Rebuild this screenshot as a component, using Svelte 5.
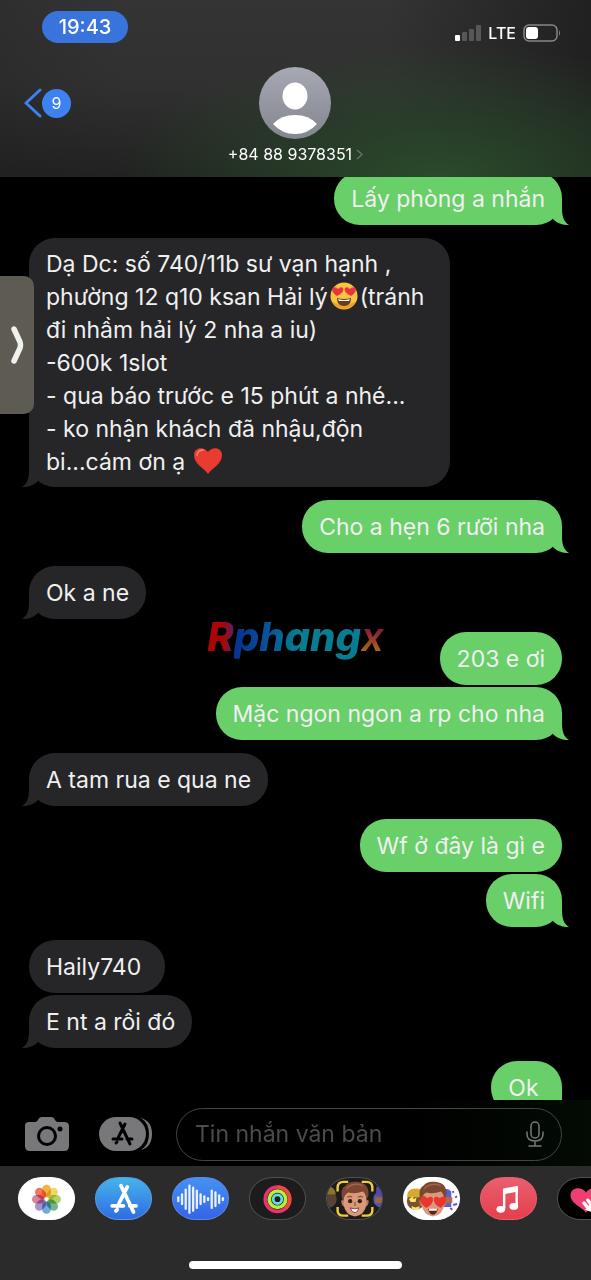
<script>
    // some messages were typed with a trailing space, kept as \u00a0
    const groups = [
        { from: 'me', messages: ['Lấy phòng a nhắn'] },
        {
            from: 'them',
            long: true,
            messages: [
                'Dạ Dc: số 740/11b sư vạn hạnh , phường 12 q10 ksan Hải lý😍(tránh đi nhầm hải lý 2 nha a iu)\n-600k 1slot\n- qua báo trước e 15 phút a nhé...\n- ko nhận khách đã nhậu,độn bi...cám ơn ạ ❤️'
            ]
        },
        { from: 'me', messages: ['Cho a hẹn 6 rưỡi nha'] },
        { from: 'them', messages: ['Ok a ne'] },
        { from: 'me', messages: ['203 e ơi', 'Mặc ngon ngon a rp cho nha'] },
        { from: 'them', messages: ['A tam rua e qua ne'] },
        { from: 'me', messages: ['Wf ở đây là gì e', 'Wifi'] },
        { from: 'them', messages: ['Haily740\u00a0', 'E nt a rồi đó'] },
        { from: 'me', messages: ['Ok\u00a0'] }
    ];

    // emoji are drawn, so they are split out of the text
    function parts(text) {
        return text.split(/(😍|❤️)/);
    }

    const petals = [
        ['#f5a623', 0], ['#e8d24a', 45], ['#a4c94f', 90], ['#57a878', 135],
        ['#5a9bd5', 180], ['#9a7fc0', 225], ['#cf6f8f', 270], ['#ee6045', 315]
    ];

    const wave = [2, 5, 10, 14, 12, 9, 5, 3, 1, 9, 7, 4, 1];

    let draft = '';
</script>

{#snippet storeMark()}
    <path d="M-9 6H0M5 6H10M-6 10L-5 9M-4 5L3 -9M-2 -10L8 11" />
{/snippet}

{#snippet face()}
    <path d="M-12 0q-3-1-2 3t4 4M12 0q3-1 2 3t-4 4" fill="#b9775a" />
    <path d="M-12-5q0-8 12-8t12 8v9q-2 12-12 13q-10-1-12-13z" fill="#d9997a" />
    <path d="M-13 0q-3-12 3-15q4-5 12-4q13 1 12 14l-2 5q-1-8-4-9q-8 3-15 1q-4 2-5 8z" fill="#7c4730" />
    <path d="M-9-12q8-7 17-3" fill="none" stroke="#a0654a" stroke-width="1.5" />
{/snippet}

<div class="phone">
    <header>
        <div class="status">
            <span class="time">19:43</span>
            <div class="network">
                <svg width="26" height="16" viewBox="0 0 26 16" aria-hidden="true">
                    <rect y="10" width="5" height="6" rx="1" fill="#fff" />
                    <rect x="7" y="7" width="5" height="9" rx="1" fill="#565856" />
                    <rect x="14" y="4" width="5" height="12" rx="1" fill="#565856" />
                    <rect x="21" width="5" height="16" rx="1" fill="#565856" />
                </svg>
                <span>LTE</span>
                <svg width="38" height="18" viewBox="0 0 38 18" aria-hidden="true">
                    <rect x="1" y="1" width="33" height="16" rx="5" fill="none" stroke="#858785" stroke-width="1.5" />
                    <rect x="3" y="3" width="12" height="12" rx="3" fill="#fff" />
                    <path d="M36 6q2 3 0 6z" fill="#858785" />
                </svg>
            </div>
        </div>
        <div class="contact-row">
            <button class="back" aria-label="9">
                <svg width="18" height="30" viewBox="0 0 18 30" aria-hidden="true">
                    <path d="M16 2L2 15L16 28" fill="none" stroke="#3d82f0" stroke-width="3" stroke-linecap="round" stroke-linejoin="round" />
                </svg>
                <span class="badge">9</span>
            </button>
            <button class="contact">
                <svg width="72" height="72" viewBox="0 0 72 72" aria-hidden="true">
                    <defs>
                        <linearGradient id="avatar" x1="0" y1="0" x2="0" y2="1">
                            <stop offset="0" stop-color="#a6a8b4" />
                            <stop offset="1" stop-color="#83858f" />
                        </linearGradient>
                    </defs>
                    <circle cx="36" cy="36" r="36" fill="url(#avatar)" />
                    <ellipse cx="36" cy="29" rx="12.5" ry="13.5" fill="#fff" />
                    <path d="M14 57q8-9 22-9t22 9q-9 10-22 10t-22-10z" fill="#fff" />
                </svg>
                <span class="number">+84 88 9378351
                    <svg width="7" height="11" viewBox="0 0 7 11" aria-hidden="true">
                        <path d="M1 1L6 5.5L1 10" fill="none" stroke="#677569" stroke-width="1.3" />
                    </svg>
                </span>
            </button>
        </div>
    </header>

    <main>
        {#each groups as group}
            <div class="group {group.from}" class:long={group.long}>
                {#each group.messages as message, i}
                    <div class="bubble">{#each parts(message) as part}{#if part === '😍'}<svg class="emoji" viewBox="0 0 28 28" role="img" aria-label="😍">
                            <circle cx="14" cy="14" r="13.5" fill="#f9c440" />
                            <path d="M2 19a13 13 0 0 0 24 0q-12 8-24 0z" fill="#eda02e" />
                            <path d="M7 16q7 2 14 0q0 8-7 8t-7-8z" fill="#70381d" />
                            <path d="M8 17q6 2 12 0l-1 2H9z" fill="#fff" />
                            <path d="M7 14Q0 9 3 6q3-2 5 1q3-3 5-1q2 4-6 8zM21 14q-8-4-6-8q2-2 5 1q2-3 5-1q3 3-4 8z" fill="#e8343c" />
                        </svg>{:else if part === '❤️'}<svg class="emoji" viewBox="0 0 28 28" role="img" aria-label="❤️">
                            <path d="M14 27C10 21 0 17 0 8C0 0 10-1 14 5C18-1 28 0 28 8C28 17 18 21 14 27z" fill="#e93b30" />
                            <path d="M3 8q1-5 6-5" fill="none" stroke="#f5786a" stroke-width="2" stroke-linecap="round" />
                        </svg>{:else}{part}{/if}{/each}{#if i === group.messages.length - 1}<svg class="tail" width="18" height="27" viewBox="0 0 18 27" aria-hidden="true">
                            <path d="M0 0H11V10C11 19 13 24 18 27C11 27 6 25 2 21z" />
                        </svg>{/if}</div>
                {/each}
            </div>
        {/each}
        <div class="watermark"><span class="r">R</span><span class="mid">phang</span><span class="x">x</span></div>
    </main>

    <button class="handle" aria-label="›">
        <svg width="13" height="40" viewBox="0 0 13 40" aria-hidden="true">
            <path d="M3 4L9 17Q10 20 9 23L3 36" fill="none" stroke="#f0f0ec" stroke-width="5.5" stroke-linecap="round" stroke-linejoin="round" />
        </svg>
    </button>

    <form class="composer" on:submit|preventDefault>
        <button type="button" aria-label="Camera">
            <svg width="44" height="34" viewBox="0 0 44 34" aria-hidden="true">
                <path d="M4 5H10Q12 5 13 3Q14 0 17 0H26Q29 0 30 3Q31 5 33 5H39Q44 5 44 9V29Q44 34 39 34H5Q0 34 0 29V9Q0 5 4 5z" fill="#78787a" />
                <circle cx="22" cy="19" r="8.5" fill="none" stroke="#000" stroke-width="3" />
                <circle cx="35" cy="12" r="2.5" fill="#000" />
            </svg>
        </button>
        <button type="button" aria-label="App Store">
            <svg width="53" height="34" viewBox="0 0 53 34" aria-hidden="true">
                <rect width="47" height="34" rx="17" fill="#78787a" />
                <path d="M42 1Q53 4 53 17T42 33Q50 28 50 17T42 1z" fill="#78787a" />
                <g transform="translate(23 16)" fill="none" stroke="#000" stroke-width="3" stroke-linecap="round">{@render storeMark()}</g>
            </svg>
        </button>
        <label class="field">
            <input type="text" placeholder="Tin nhắn văn bản" aria-label="Tin nhắn văn bản" bind:value={draft} />
            <svg width="18" height="26" viewBox="0 0 18 26" aria-hidden="true">
                <g fill="none" stroke="#78787a" stroke-width="1.5" stroke-linecap="round">
                    <rect x="5" y="1" width="8" height="16" rx="4" />
                    <path d="M1 11v2q0 7 8 7t8-7v-2M9 20v5M3 25h12" />
                </g>
            </svg>
        </label>
    </form>

    <footer>
        <nav>
            <button class="app white" aria-label="Photos">
                <svg viewBox="0 0 57 43" aria-hidden="true">
                    <g transform="translate(28.5 22)">
                        {#each petals as [color, angle]}
                            <rect class="petal" x="-4.5" y="-15" width="9" height="13" rx="4.5" fill={color} transform="rotate({angle})" />
                        {/each}
                    </g>
                </svg>
            </button>
            <button class="app store" aria-label="App Store">
                <svg viewBox="0 0 57 43" aria-hidden="true">
                    <g transform="translate(28.5 21) scale(1.3)" fill="none" stroke="#fff" stroke-width="3" stroke-linecap="round">{@render storeMark()}</g>
                </svg>
            </button>
            <button class="app audio" aria-label="Audio">
                <svg viewBox="0 0 57 43" aria-hidden="true">
                    {#each wave as h, i}
                        <path d="M{5.5 + i * 3.85} {22 - h}v{h * 2}" stroke="#e8f1ff" stroke-width="2.4" stroke-linecap="round" />
                    {/each}
                </svg>
            </button>
            <button class="app dark" aria-label="Activity">
                <svg viewBox="0 0 57 43" aria-hidden="true">
                    <g fill="none" stroke-width="3.8">
                        <circle cx="28.5" cy="22" r="12.7" stroke="#e8336d" />
                        <path d="M28.5 9.3A12.7 12.7 0 0 1 37 31.4" stroke="#f04a3c" />
                        <circle cx="28.5" cy="22" r="8.5" stroke="#b6f03c" />
                        <circle cx="28.5" cy="22" r="4.5" stroke="#62dce4" stroke-width="3" />
                    </g>
                </svg>
            </button>
            <button class="app dark" aria-label="Memoji">
                <svg viewBox="0 0 57 43" aria-hidden="true">
                    <circle cx="1" cy="22" r="9" fill="#5a4136" />
                    <path d="M-4 17q0-9 8-8q5 2 5 8z" fill="#8b7424" />
                    <circle cx="57" cy="22" r="9" fill="#4b55b4" />
                    <path d="M50 20h9v6h-9z" fill="#a4623c" />
                    <path d="M51 9h8v9h-8z" fill="#5547ad" />
                    <g transform="translate(29 23)">
                        {@render face()}
                        <circle cx="-5" cy="1" r="2.2" fill="#33211c" />
                        <circle cx="5" cy="1" r="2.2" fill="#33211c" />
                        <path d="M-8-3q3-2 5 0M3-3q3-2 5 0M0 2v4" fill="none" stroke="#8a5238" stroke-width="1.2" />
                        <path d="M-5 8q5 2 9 0q-1 5-4 5t-5-5z" fill="#fff" stroke="#8b3e35" />
                    </g>
                    <path d="M11 14V10Q11 4 17 4H22M36 4H41Q47 4 47 10V14M47 30V34Q47 39 41 39H36M22 39H17Q11 39 11 34V30" fill="none" stroke="#f0cb3c" stroke-width="2.5" />
                </svg>
            </button>
            <button class="app white" aria-label="Stickers">
                <svg viewBox="0 0 57 43" aria-hidden="true">
                    <circle cx="12" cy="24" r="9" fill="#7b5132" />
                    <path d="M3 20q0-9 9-9t9 9z" fill="#d9a72c" />
                    <path d="M5 22l4-3l1 3l3-2l-1 5h-5zM8 29q4 3 8 0v3q-4 3-8 0z" fill="#fbe26b" />
                    <path d="M39 14q5-5 10 0v16h-9z" fill="#5960d0" />
                    <path d="M41 20h9v6h-9z" fill="#b46b4a" />
                    <path d="M50 15l2-1M53 20l2-1M51 28l4-1M48 31l2 2" stroke="#6a4be0" stroke-width="2" />
                    <g transform="translate(30 23)">
                        {@render face()}
                        <path d="M-7 8Q-16 2-12-3Q-9-6-6-2Q-2-5 0-2Q1 4-7 8zM8 8Q0 4 1-2Q3-5 7-2Q10-5 13-3Q16 2 8 8z" fill="#ed3530" />
                        <path d="M-5 9q5 2 10 0q-1 6-5 6t-5-6z" fill="#5b211e" />
                        <path d="M-4 9h8v2h-8z" fill="#fff" />
                    </g>
                </svg>
            </button>
            <button class="app music" aria-label="Music">
                <svg viewBox="0 0 57 43" aria-hidden="true">
                    <path d="M24 12V32M37 9V29" fill="none" stroke="#fff" stroke-width="2.5" />
                    <path d="M23 11L38 8V14L23 17z" fill="#fff" />
                    <ellipse cx="20.5" cy="32.5" rx="4.5" ry="3.5" fill="#fff" />
                    <ellipse cx="34" cy="29.5" rx="4.5" ry="3.5" fill="#fff" />
                </svg>
            </button>
            <button class="app black" aria-label="Digital Touch">
                <svg viewBox="0 0 57 43" aria-hidden="true">
                    <path d="M29 36C25 30 13 27 13 18C13 10 24 8 29 15C34 8 44 10 44 18C44 27 33 30 29 36z" fill="#ee3f74" />
                    <path d="M27 26l5 6M31 23l5 7" stroke="#fff" stroke-width="3.5" stroke-linecap="round" />
                    <path d="M28 33l7-8l6 3v9z" fill="#fff" />
                </svg>
            </button>
        </nav>
        <div class="home-bar"></div>
    </footer>
</div>

<style>
    :global(body) {
        background: #000;
    }

    .phone {
        position: relative;
        display: flex;
        flex-direction: column;
        height: 100vh;
        overflow: hidden;
        font-family: Inter, "Liberation Sans", sans-serif;
        color: #fff;
    }

    button {
        padding: 0;
        border: 0;
        background: none;
        color: inherit;
        font: inherit;
        cursor: pointer;
    }

    svg {
        display: block;
    }

    header {
        height: 177px;
        flex: none;
        background:
            radial-gradient(ellipse 55% 75% at 74% 100%, #2a4b2b, transparent),
            linear-gradient(90deg, #1f1f1f44, transparent 20%, transparent 65%, #1c1c1ccc),
            linear-gradient(#343434, #303030 50%, #202120);
    }

    .status {
        display: flex;
        justify-content: space-between;
        padding: 11px 30px 0 42px;
    }

    .time {
        width: 86px;
        height: 32px;
        border-radius: 16px;
        background: #3874db;
        font-size: 20px;
        font-weight: 500;
        line-height: 32px;
        text-align: center;
    }

    .network {
        display: flex;
        align-items: center;
        gap: 7px;
        padding-top: 11px;
        font-size: 16px;
        font-weight: 500;
        line-height: 20px;
    }

    .contact-row {
        display: grid;
        grid-template-columns: 1fr auto 1fr;
        align-items: start;
        padding: 24px 24px 0;
    }

    .back {
        display: flex;
        align-items: center;
        justify-self: start;
        padding-top: 21px;
    }

    .badge {
        width: 29px;
        height: 29px;
        border-radius: 50%;
        background: #3d82f0;
        font-size: 16px;
        line-height: 29px;
    }

    .contact {
        display: flex;
        flex-direction: column;
        align-items: center;
        gap: 5px;
    }

    .number {
        display: flex;
        align-items: center;
        gap: 4px;
        font-size: 16px;
        line-height: 20px;
    }

    main {
        position: relative;
        flex: 1;
        min-height: 0;
        overflow: hidden;
        display: flex;
        flex-direction: column;
        gap: 13px;
        padding: 0 29px;
    }

    .group {
        flex: none;
        display: flex;
        flex-direction: column;
        align-items: flex-start;
        gap: 2px;
    }

    .group:first-child {
        margin-top: -5px;
    }

    .me {
        align-items: flex-end;
    }

    .bubble {
        position: relative;
        box-sizing: border-box;
        max-width: 79%;
        padding: 11px 17px 9px;
        border-radius: 26px;
        background: #262628;
        color: #f0f0f1;
        font-size: 23px;
        line-height: 33px;
        white-space: pre-line;
    }

    .long .bubble {
        padding: 10px 17px 8px;
    }

    .me .bubble {
        background: #68cf69;
    }

    .emoji {
        display: inline-block;
        width: 28px;
        height: 28px;
        margin: 0 2px;
        vertical-align: -5px;
    }

    .tail {
        position: absolute;
        bottom: 0;
        left: -7px;
        transform: scaleX(-1);
        fill: #262628;
    }

    .me .tail {
        left: auto;
        right: -7px;
        transform: none;
        fill: #68cf69;
    }

    .watermark {
        position: absolute;
        top: 436px;
        left: 50%;
        transform: translateX(-50%);
        font-size: 40px;
        font-style: italic;
        font-weight: 800;
        line-height: 48px;
        white-space: nowrap;
        color: transparent;
    }

    .watermark span {
        background-clip: text;
    }

    .watermark .r {
        background-image: linear-gradient(90deg, #ab0508 60%, #5c2060);
    }

    .watermark .mid {
        background-image: linear-gradient(90deg, #07308f, #08579a 30%, #087c91 50%, #087c91);
    }

    .watermark .x {
        background-image: linear-gradient(#8c1f38 40%, #a56a14 80%);
        font-weight: 600;
    }

    .handle {
        position: absolute;
        top: 276px;
        left: 0;
        display: flex;
        align-items: center;
        justify-content: flex-end;
        width: 34px;
        height: 138px;
        padding-right: 10px;
        border-radius: 0 10px 10px 0;
        background: #5d5b52;
    }

    .composer {
        position: relative;
        display: flex;
        align-items: center;
        box-sizing: border-box;
        flex: none;
        gap: 30px;
        height: 66px;
        padding: 2px 29px 0 25px;
        background: linear-gradient(90deg, #000 70%, #030b04);
    }

    .field {
        display: flex;
        align-items: center;
        flex: 1;
        min-width: 0;
        height: 51px;
        margin-left: -6px;
        padding: 0 17px 0 18px;
        border: 1px solid #454547;
        border-radius: 27px;
    }

    input {
        flex: 1;
        min-width: 0;
        padding: 0;
        border: 0;
        outline: 0;
        background: none;
        color: #fff;
        font: 23px/33px Inter, "Liberation Sans", sans-serif;
    }

    input::placeholder {
        color: #4c4c4e;
        opacity: 1;
    }

    footer {
        flex: none;
        height: 103px;
        padding-top: 11px;
        overflow: hidden;
        background: #2b2b2b;
    }

    nav {
        display: flex;
        gap: 20px;
        padding-left: 18px;
    }

    .app {
        flex: none;
        box-sizing: border-box;
        width: 57px;
        height: 43px;
        overflow: hidden;
        border: 1px solid #505052;
        border-radius: 24px / 21px;
    }

    .white {
        border-color: #fff;
        background: #fff;
    }

    .store {
        border-color: #5a9ae0;
        background: linear-gradient(#46b4ea, #2f6be4);
    }

    .audio {
        border-color: #5a8ae8;
        background: linear-gradient(#4591f3, #3564e8);
    }

    .dark {
        background: #1c1c1d;
    }

    .music {
        border-color: #e8606c;
        background: linear-gradient(#ea5f70, #e43f4c);
    }

    .black {
        background: #000;
    }

    .petal {
        opacity: 0.85;
        mix-blend-mode: multiply;
    }

    .home-bar {
        width: 36%;
        height: 8px;
        margin: 41px auto 0;
        border-radius: 4px;
        background: #fff;
    }
</style>
